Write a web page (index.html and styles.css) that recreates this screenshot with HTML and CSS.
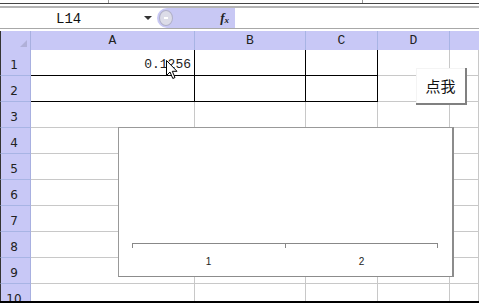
FILE: index.html
```html
<!DOCTYPE html>
<html lang="zh">
<head>
    <meta charset="UTF-8">
    <title>Sheet</title>
    <link rel="stylesheet" href="styles.css">
</head>
<body>
    <div class="toolbar">
        <span class="sep sep1"></span>
        <span class="sep sep2"></span>
    </div>
    <div class="fbar">
        <div class="namebox">
            <span class="name">L14</span>
            <span class="arrow"></span>
        </div>
        <div class="fxarea">
            <span class="knob"></span>
            <span class="fx">f<sub>x</sub></span>
        </div>
        <div class="finput"></div>
    </div>
    <div class="sheet">
        <div class="grid">
            <div class="corner"><span class="tri"></span></div>
            <div class="colhead">A</div>
            <div class="colhead">B</div>
            <div class="colhead">C</div>
            <div class="colhead">D</div>
            <div class="colhead last"></div>

            <div class="rowhead">1</div>
            <div class="cell bold num">0.1256</div>
            <div class="cell bold"></div>
            <div class="cell bold"></div>
            <div class="cell"></div>
            <div class="cell"></div>

            <div class="rowhead">2</div>
            <div class="cell bold"></div>
            <div class="cell bold"></div>
            <div class="cell bold"></div>
            <div class="cell"></div>
            <div class="cell"></div>

            <div class="rowhead">3</div>
            <div class="cell"></div><div class="cell"></div><div class="cell"></div><div class="cell"></div><div class="cell"></div>
            <div class="rowhead">4</div>
            <div class="cell"></div><div class="cell"></div><div class="cell"></div><div class="cell"></div><div class="cell"></div>
            <div class="rowhead">5</div>
            <div class="cell"></div><div class="cell"></div><div class="cell"></div><div class="cell"></div><div class="cell"></div>
            <div class="rowhead">6</div>
            <div class="cell"></div><div class="cell"></div><div class="cell"></div><div class="cell"></div><div class="cell"></div>
            <div class="rowhead">7</div>
            <div class="cell"></div><div class="cell"></div><div class="cell"></div><div class="cell"></div><div class="cell"></div>
            <div class="rowhead">8</div>
            <div class="cell"></div><div class="cell"></div><div class="cell"></div><div class="cell"></div><div class="cell"></div>
            <div class="rowhead">9</div>
            <div class="cell"></div><div class="cell"></div><div class="cell"></div><div class="cell"></div><div class="cell"></div>
            <div class="rowhead">10</div>
            <div class="cell"></div><div class="cell"></div><div class="cell"></div><div class="cell"></div><div class="cell"></div>
        </div>

        <button class="btn">点我</button>

        <div class="chart">
            <div class="ticks">
                <span></span><span></span>
            </div>
            <div class="labels">
                <span>1</span><span>2</span>
            </div>
        </div>

        <svg class="cursor" width="13" height="20" viewBox="0 0 13 20">
            <path d="M0.5 0.5 L0.5 15.5 L4 12 L6.8 18.5 L9 17.5 L6.3 11.3 L11 11.3 Z" fill="#fff" stroke="#000" stroke-width="1"/>
        </svg>
    </div>
</body>
</html>
```

FILE: styles.css
```css
body {
    margin: 0;
    width: 479px;
    height: 303px;
    overflow: hidden;
    background: #fff;
    font-family: "Liberation Mono", monospace;
}
.toolbar {
    position: relative;
    height: 3px;
    border-bottom: 1px solid #444;
}
.sep {
    position: absolute;
    top: 0;
    width: 1px;
    height: 3px;
    background: #999;
}
.sep1 { left: 108px; }
.sep2 { left: 362px; }
.fbar {
    display: flex;
    height: 20px;
    margin-top: 2px;
    border-top: 2px solid #b4b4b4;
    border-bottom: 1px solid #a8a8a8;
}
.namebox {
    position: relative;
    width: 157px;
    font-size: 14px;
    line-height: 20px;
    color: #111;
}
.name {
    position: absolute;
    left: 56px;
    top: 1px;
}
.arrow {
    position: absolute;
    left: 144px;
    top: 8px;
    border-left: 4px solid transparent;
    border-right: 4px solid transparent;
    border-top: 4px solid #333;
}
.fxarea {
    display: flex;
    align-items: center;
    justify-content: space-between;
    width: 78px;
    background: #c8c8f4;
    border-radius: 10px 0 0 10px;
    padding: 0 6px 0 2px;
    box-sizing: border-box;
}
.knob {
    width: 14px;
    height: 16px;
    border-radius: 50%;
    background: #dcdce8;
    border: 1px solid #b0b0c8;
    box-sizing: border-box;
    position: relative;
}
.knob::after {
    content: "";
    position: absolute;
    left: 4px;
    top: 6px;
    width: 4px;
    height: 2px;
    background: #fff;
}
.fx {
    font-family: "Liberation Serif", serif;
    font-style: italic;
    font-weight: bold;
    font-size: 13px;
    color: #222;
}
.fx sub {
    font-size: 9px;
    vertical-align: -1px;
}
.finput {
    flex: 1;
}
.sheet {
    position: relative;
    margin-top: 2px;
    height: 270px;
    overflow: hidden;
    border-bottom: 2px solid #000;
}
.grid {
    display: grid;
    grid-template-columns: 31px 164px 111px 72px 72px 29px;
    grid-template-rows: 19px repeat(10, 26px);
}
.grid > div {
    box-sizing: border-box;
}
.corner {
    position: relative;
    background: #c8c8f6;
    border-left: 1px solid #333;
    border-right: 1px solid #a8b0e0;
}
.tri {
    position: absolute;
    right: 3px;
    bottom: 3px;
    border-left: 7px solid transparent;
    border-bottom: 7px solid #b0b0d8;
}
.colhead {
    background: #c8c8f6;
    border-right: 1px solid #a8b4e4;
    text-align: center;
    font-size: 13px;
    line-height: 20px;
    color: #222;
}
.colhead.last {
    border-right: none;
}
.rowhead {
    background: #c8c8f6;
    border-left: 1px solid #333;
    border-right: 1px solid #a8b0e0;
    border-bottom: 1px solid #a8b4e4;
    display: flex;
    align-items: flex-end;
    justify-content: center;
    padding: 0 3px 3px 0;
    font-family: "DejaVu Sans", sans-serif;
    font-size: 12px;
    color: #222;
}
.cell {
    border-right: 1px solid #c8c8c8;
    border-bottom: 1px solid #c8c8c8;
    display: flex;
    align-items: flex-end;
    justify-content: flex-end;
    padding: 0 3px 3px 0;
    font-size: 13px;
    color: #222;
}
.cell.bold {
    border-right-color: #000;
    border-bottom-color: #000;
}
.btn {
    position: absolute;
    left: 416px;
    top: 37px;
    width: 51px;
    height: 37px;
    background: #fff;
    border: none;
    border-right: 2px solid #808080;
    border-bottom: 2px solid #808080;
    box-shadow: inset 1px 1px 0 #f4f4f4;
    font-family: "Noto Sans CJK SC", sans-serif;
    font-size: 15px;
    color: #111;
    padding: 0;
}
.chart {
    position: absolute;
    left: 118px;
    top: 96px;
    width: 336px;
    height: 150px;
    box-sizing: border-box;
    background: #fff;
    border: 1px solid #999;
    border-right: 2px solid #8c8c8c;
    border-bottom: 1px solid #8c8c8c;
    display: flex;
    flex-direction: column;
    justify-content: flex-end;
    padding: 0 14px 0 13px;
}
.ticks {
    display: grid;
    grid-template-columns: 1fr 1fr;
    height: 5px;
    border-top: 1px solid #888;
    border-right: 1px solid #888;
    box-sizing: border-box;
}
.ticks span {
    border-left: 1px solid #888;
}
.labels {
    display: grid;
    grid-template-columns: 1fr 1fr;
    height: 28px;
    line-height: 28px;
    text-align: center;
    font-family: "Liberation Sans", sans-serif;
    font-size: 10px;
    color: #222;
}
.cursor {
    position: absolute;
    left: 166px;
    top: 29px;
}
```
